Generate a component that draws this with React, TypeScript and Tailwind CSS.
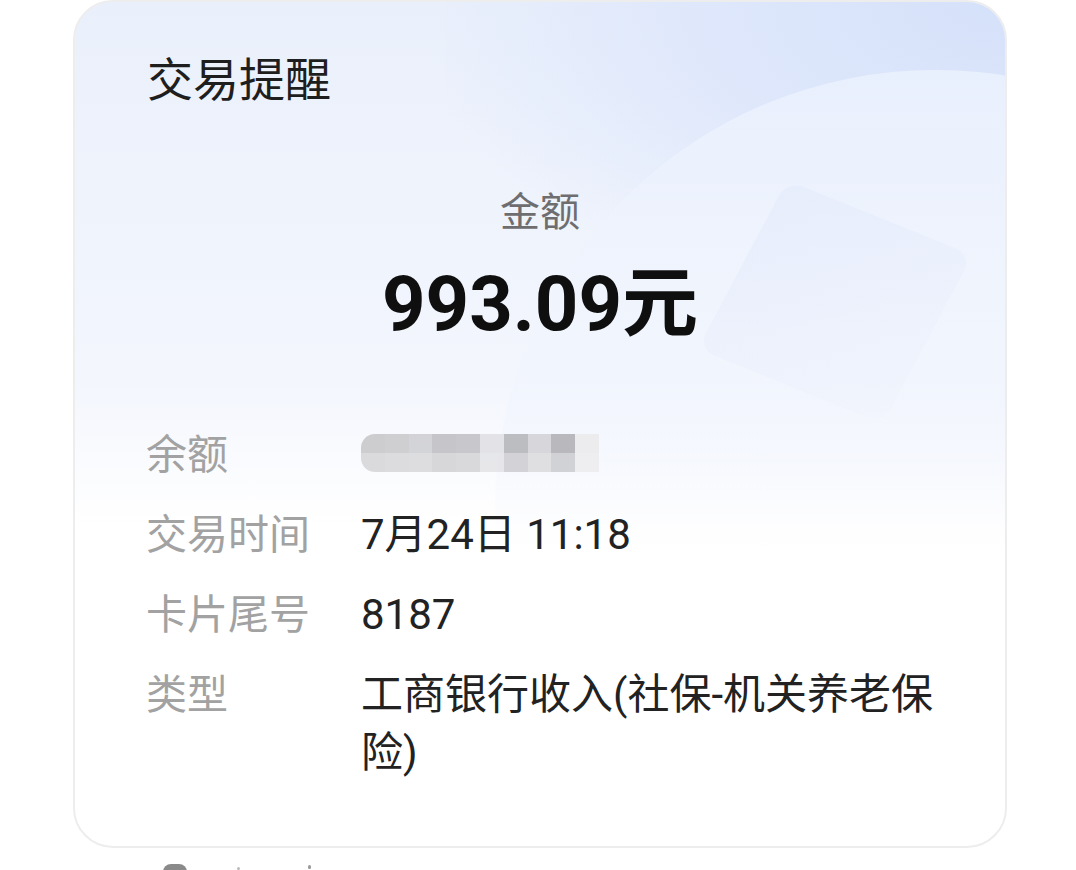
import React from 'react';

const FONT = { fontFamily: 'Roboto, "Noto Sans CJK SC", "Noto Sans", sans-serif' };

// pixelated mask over the balance value
const TOP = ['#cbcbcd', '#cdcdd0', '#d2d2d5', '#c4c4c8', '#c6c6ca', '#e2e2e6', '#bababe', '#d6d6da', '#b6b6ba', '#ececef'];
const BOTTOM = ['#d9d9dc', '#dbdbde', '#dcdcdf', '#d6d6d9', '#d8d8db', '#e6e6e9', '#d2d2d5', '#dedee1', '#d0d0d3', '#eeeef1'];

function Masked() {
  return (
    <div className="mt-[8px] flex h-[38px] w-[238px] overflow-hidden rounded-l-[14px] opacity-95 blur-[0.6px]">
      {TOP.map((c, i) => (
        <div key={i} className="flex flex-1 flex-col">
          <div className="flex-1" style={{ background: c }} />
          <div className="flex-1" style={{ background: BOTTOM[i] }} />
        </div>
      ))}
    </div>
  );
}

interface RowProps {
  label: string;
  children: React.ReactNode;
}

function Row({ label, children }: RowProps) {
  return (
    <div className="grid grid-cols-[215px_1fr] leading-[58px]">
      <div className="text-[41px] text-[#a2a2a2]">{label}</div>
      <div className="text-[42px] text-[#222222]">{children}</div>
    </div>
  );
}

export default function App() {
  return (
    <div className="min-h-[870px] w-[1076px] overflow-hidden bg-white" style={FONT}>
      <div className="relative ml-[73px] h-[848px] w-[934px] overflow-hidden rounded-[40px] border-2 border-[#ededee] bg-gradient-to-b from-[#eaf0fb] via-[#f3f6fd] via-45% to-white to-62%">
        {/* background decoration */}
        <div className="absolute right-0 top-0 h-[300px] w-[560px] bg-[radial-gradient(ellipse_at_top_right,#d5e1fa_0%,#dfe8fb_40%,rgba(233,239,251,0)_75%)]" />
        <div className="absolute left-[420px] top-[68px] h-[880px] w-[880px] rounded-full bg-gradient-to-b from-[#e9f0fd] via-[#f1f5fd] via-30% to-transparent to-55%" />
        <div className="absolute left-[660px] top-[205px] h-[190px] w-[200px] rotate-[22deg] skew-x-[-6deg] rounded-[18px] bg-gradient-to-br from-[#e3eafb] to-[#edf0fb]/30 opacity-60" />

        <div className="relative flex flex-col">
          <div className="ml-[72px] mt-[55px] text-[46px] leading-none text-[#1e1e1e]">交易提醒</div>

          <div className="mt-[90px] text-center text-[40px] leading-none text-[#6e6e70]">金额</div>
          <div className="mt-[33px] text-center text-[76px] font-bold leading-none text-[#0f0f0f]">993.09元</div>

          <div className="ml-[71px] mr-[50px] mt-[84px] flex flex-col gap-[22px]">
            <div className="grid grid-cols-[215px_1fr] leading-[58px]">
              <div className="text-[41px] text-[#a2a2a2]">余额</div>
              <Masked />
            </div>
            <Row label="交易时间">7月24日 11:18</Row>
            <Row label="卡片尾号">8187</Row>
            <Row label="类型">工商银行收入(社保-机关养老保险)</Row>
          </div>
        </div>
      </div>

      {/* next item, cut off by the window edge */}
      <div className="ml-[163px] mt-[16px] flex items-start gap-[50px]">
        <div className="h-[20px] w-[24px] rounded-t-[8px] bg-[#8a8a8a]" />
        <div className="mt-[3px] h-[3px] w-[3px] rounded-full bg-[#bbbbbb]" />
        <div className="ml-[18px] mt-[1px] h-[4px] w-[3px] rounded-full bg-[#9a9a9a]" />
      </div>
    </div>
  );
}
